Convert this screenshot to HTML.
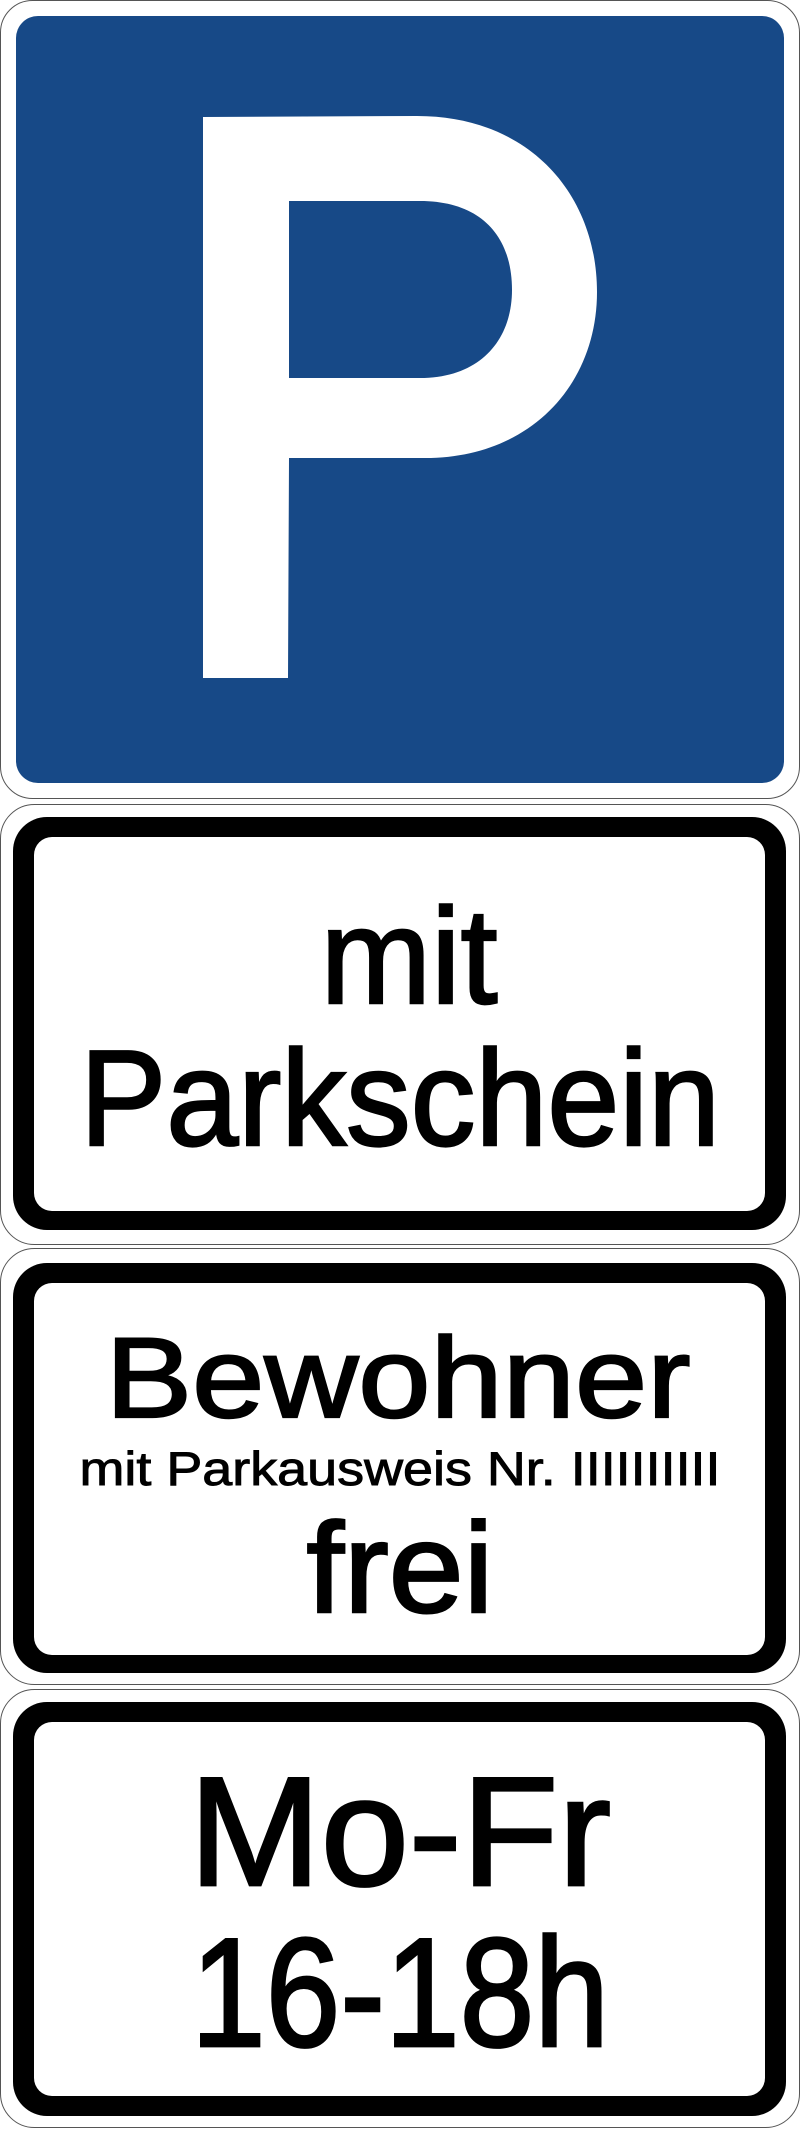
<!DOCTYPE html>
<html><head><meta charset="utf-8"><style>
html,body{margin:0;padding:0;background:#fff;}
svg{display:block;}
text{font-family:"Liberation Sans",sans-serif;fill:#000;stroke:#000;stroke-linejoin:miter;}
</style></head><body>
<svg width="800" height="2129" viewBox="0 0 800 2129" xmlns="http://www.w3.org/2000/svg">
<!-- Sign 1 -->
<rect x="0.5" y="0.5" width="799" height="798" rx="32" fill="#fff" stroke="#555" stroke-width="1"/>
<rect x="16" y="16" width="768" height="767" rx="22" fill="#174987"/>
<path fill="#fff" fill-rule="evenodd" d="M203,117 L417,116 C530,116 597,195 597,292 C597,385 530,458 425,458 L289,458 L288,678 L203,678 Z M289,201 L420,201 C480,201 512,235 512,290 C512,340 480,378 420,378 L289,378 Z"/>
<!-- Sign 2 -->
<rect x="0.5" y="804.5" width="799" height="440" rx="34" fill="#fff" stroke="#555" stroke-width="1"/>
<rect x="13" y="817" width="773" height="413" rx="34" fill="#000"/>
<rect x="34" y="837" width="731" height="374" rx="18" fill="#fff"/>
<text x="409" y="1003" font-size="136" stroke-width="2.5" text-anchor="middle" textLength="177" lengthAdjust="spacingAndGlyphs">mit</text>
<text x="400" y="1145" font-size="136" stroke-width="2.5" text-anchor="middle" textLength="640" lengthAdjust="spacingAndGlyphs">Parkschein</text>
<!-- Sign 3 -->
<rect x="0.5" y="1248.5" width="799" height="436" rx="34" fill="#fff" stroke="#555" stroke-width="1"/>
<rect x="13" y="1263" width="773" height="410" rx="34" fill="#000"/>
<rect x="34" y="1283" width="731" height="372" rx="18" fill="#fff"/>
<text x="398" y="1417" font-size="114" stroke-width="2.2" text-anchor="middle" textLength="585" lengthAdjust="spacingAndGlyphs">Bewohner</text>
<text x="400" y="1485" font-size="47" stroke-width="0.9" text-anchor="middle" textLength="641" lengthAdjust="spacingAndGlyphs">mit Parkausweis Nr. IIIIIIIIII</text>
<text x="400" y="1612" font-size="128" stroke-width="2.5" text-anchor="middle" textLength="187" lengthAdjust="spacingAndGlyphs">frei</text>
<!-- Sign 4 -->
<rect x="0.5" y="1689.5" width="799" height="438" rx="34" fill="#fff" stroke="#555" stroke-width="1"/>
<rect x="13" y="1702" width="773" height="414" rx="34" fill="#000"/>
<rect x="34" y="1722" width="731" height="374" rx="18" fill="#fff"/>
<text x="400" y="1885" font-size="155" stroke-width="2.8" text-anchor="middle" textLength="422" lengthAdjust="spacingAndGlyphs">Mo-Fr</text>
<text x="400" y="2046" font-size="155" stroke-width="2.8" text-anchor="middle" textLength="418" lengthAdjust="spacingAndGlyphs">16-18h</text>
</svg>
</body></html>
